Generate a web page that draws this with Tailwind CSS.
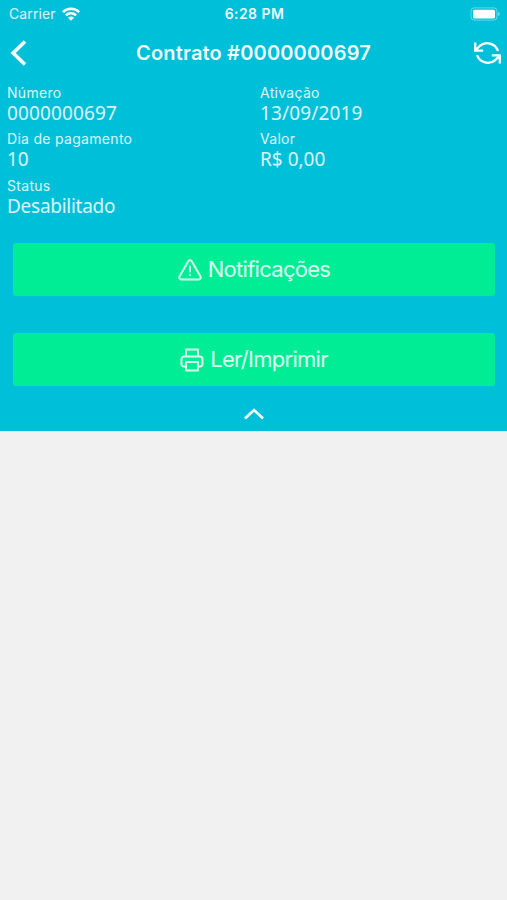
<!DOCTYPE html>
<html lang="pt-BR">
<head>
<meta charset="utf-8">
<title>Contrato</title>
<script src="https://cdn.jsdelivr.net/npm/@tailwindcss/browser@4"></script>
</head>
<body class="h-[900px] w-[507px] overflow-hidden bg-[#f1f1f1] font-['Inter',sans-serif] text-white">
<div class="flex h-[430.5px] flex-col bg-[#00bfd9]">
  <div class="grid h-7 shrink-0 grid-cols-3 items-center pr-[7px] pl-[9px]">
    <div class="flex items-center gap-[6px]">
      <span class="text-[14px] leading-7 tracking-[0.1px] text-white/85">Carrier</span>
      <svg class="h-[14px] w-[18px]" viewBox="0 0 18 14" fill="none" stroke="white" stroke-width="2.5"><path d="M.9 5.2a11.5 11.5 0 0 1 16.2 0M3.9 8.3a7.2 7.2 0 0 1 10.2 0"/><path d="M9 13.7 6 10.7a4.2 4.2 0 0 1 6 0Z" fill="white" stroke="none"/></svg>
    </div>
    <div class="text-center text-[14px] leading-7 font-semibold tracking-[0.45px] whitespace-nowrap text-white/95">6:28 PM</div>
    <svg class="h-[14px] w-[30px] justify-self-end" viewBox="0 0 30 14"><rect x="1" y=".9" width="26" height="12.2" rx="3" fill="none" stroke="white" stroke-opacity=".4"/><rect x="3" y="2.7" width="22" height="8.8" rx="1.5" fill="white"/><path d="M28.2 5v4q1.6-.6 1.6-2t-1.6-2" fill="white" fill-opacity=".5"/></svg>
  </div>
  <div class="flex h-[49px] shrink-0 items-center justify-between pr-[6px] pl-[10px]">
    <svg class="h-[26px] w-[23px]" viewBox="0 0 23 26" fill="none" stroke="white" stroke-width="3.6"><path d="M15 1.5 3.2 13 15 24.5"/></svg>
    <div class="text-[20px] leading-6 font-semibold tracking-[0.17px] whitespace-nowrap text-white/95">Contrato #0000000697</div>
    <svg class="h-[24px] w-[27px]" viewBox="0 0 27 24" fill="none" stroke="white" stroke-width="2.3"><path d="M1.2 1.5V9.6H9.2M1.6 9.2 5.6 5A11.6 11.6 0 0 1 24 9.8M25.8 22.5V14.4H17.8M25.4 14.8 21.4 19A11.6 11.6 0 0 1 3 14.2"/></svg>
  </div>
  <div class="grid h-[140px] shrink-0 grid-cols-[253px_1fr] grid-rows-[46px_47px_46px] content-start pt-[6px] pl-[7px] text-white/85">
    <div><div class="text-[14px] leading-5 tracking-[0.3px]">Número</div><div class="font-['Noto_Sans',sans-serif] text-[19px] leading-5 tracking-[0.13px]">0000000697</div></div>
    <div><div class="text-[14px] leading-5 tracking-[0.3px]">Ativação</div><div class="font-['Noto_Sans',sans-serif] text-[19px] leading-5 tracking-[0.13px]">13/09/2019</div></div>
    <div><div class="text-[14px] leading-5 tracking-[0.3px]">Dia de pagamento</div><div class="font-['Noto_Sans',sans-serif] text-[19px] leading-5">10</div></div>
    <div><div class="text-[14px] leading-5 tracking-[0.3px]">Valor</div><div class="font-['Noto_Sans',sans-serif] text-[19px] leading-5">R$ 0,00</div></div>
    <div><div class="text-[14px] leading-5 tracking-[0.3px]">Status</div><div class="font-['Noto_Sans',sans-serif] text-[19px] leading-5 tracking-[-0.27px]">Desabilitado</div></div>
  </div>
  <div class="flex flex-col gap-[37px] pt-[26px] pr-3 pl-[13px]">
    <button class="flex h-[53px] items-center justify-center gap-[6px] rounded-[3px] bg-[#00ed95] text-[22px] tracking-[-0.72px] text-white/85">
      <svg class="size-6" viewBox="0 0 24 24" fill="none" stroke="currentColor" stroke-width="2" stroke-linecap="round" stroke-linejoin="round"><path d="M10.3 3.3 1.5 18.6a1.9 1.9 0 0 0 1.7 2.8h17.6a1.9 1.9 0 0 0 1.7-2.8L13.7 3.3a2 2 0 0 0-3.4 0ZM12 8.4v5M12 17.1v.1"/></svg>
      <span>Notificações</span>
    </button>
    <button class="flex h-[53px] items-center justify-center gap-[6px] rounded-[3px] bg-[#00ed95] text-[22px] tracking-[-0.72px] text-white/85">
      <svg class="size-6" viewBox="0 0 24 24" fill="none" stroke="currentColor" stroke-width="2" stroke-linecap="round" stroke-linejoin="round"><path d="M6 8.5V1.5h12v7M6 18.5H3.8a2.3 2.3 0 0 1-2.3-2.3v-5A2.7 2.7 0 0 1 4.2 8.5h15.6a2.7 2.7 0 0 1 2.7 2.7v5a2.3 2.3 0 0 1-2.3 2.3H18M6 14h12v8.5H6Z"/></svg>
      <span>Ler/Imprimir</span>
    </button>
  </div>
  <svg class="mt-[22px] h-3 w-5 shrink-0 self-center" viewBox="0 0 20 12" fill="none" stroke="white" stroke-width="2.6"><path d="M1 10.5 10 2 19 10.5"/></svg>
</div>
</body>
</html>
